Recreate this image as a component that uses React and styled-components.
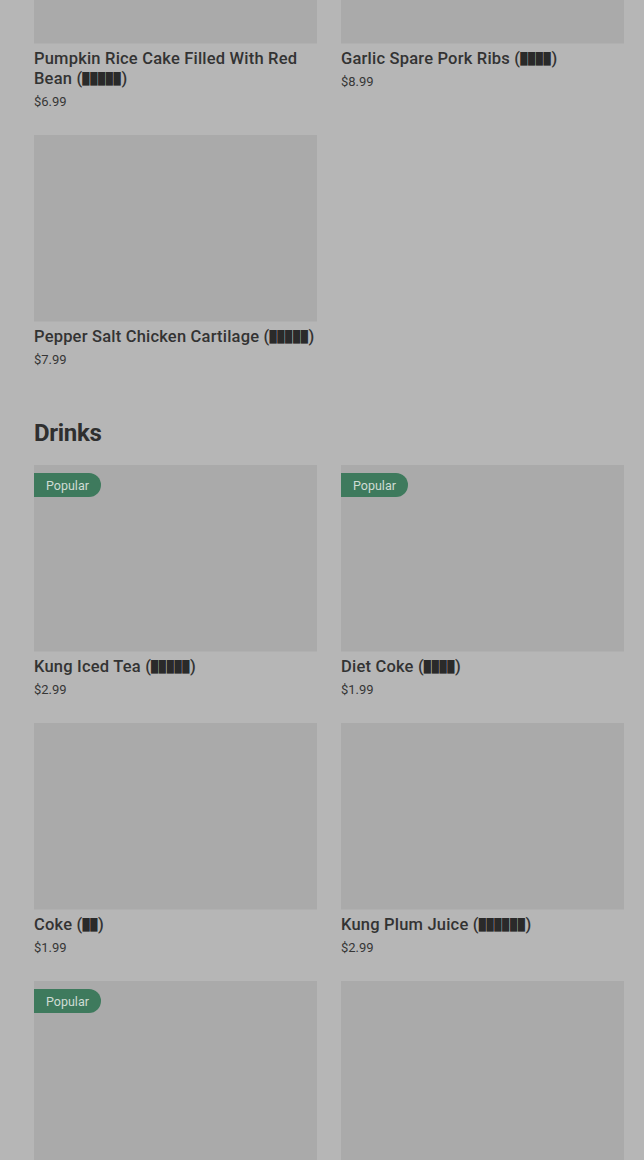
import React from "react";
import styled, { createGlobalStyle } from "styled-components";

const GlobalStyle = createGlobalStyle`
  html, body {
    margin: 0;
    padding: 0;
    background: #b6b6b6;
    overflow: hidden;
  }
  body {
    font-family: Roboto, "Noto Sans", sans-serif;
    color: #2f2f2f;
  }
`;

const Page = styled.div`
  padding: 0 20px 0 34px;
  margin-top: -143px;
`;

const Section = styled.section`
  & + & {
    margin-top: 49px;
  }
`;

const SectionTitle = styled.h2`
  margin: 0 0 17px;
  font-size: 24px;
  line-height: 30px;
  font-weight: 700;
  letter-spacing: -0.3px;
  color: #2f2f2f;
`;

const Grid = styled.div`
  display: grid;
  grid-template-columns: 1fr 1fr;
  column-gap: 24px;
  row-gap: 24px;
`;

const Card = styled.div`
  display: flex;
  flex-direction: column;
`;

const Thumb = styled.div`
  position: relative;
  height: 187px;
  background: #aaaaaa;
  border-bottom: 1px solid #b0b0b0;
  box-sizing: border-box;
`;

const Badge = styled.span`
  position: absolute;
  top: 8px;
  left: 0;
  height: 24px;
  padding: 0 12px;
  display: flex;
  align-items: center;
  background: #3e7a5d;
  color: #cfdcd4;
  font-size: 12.5px;
  border-radius: 0 12px 12px 0;
`;

const Name = styled.div`
  margin-top: 5px;
  font-size: 16.5px;
  line-height: 20px;
  font-weight: 500;
  letter-spacing: 0.2px;
  color: #333333;
`;

const Price = styled.div`
  margin-top: 4px;
  font-size: 13px;
  line-height: 18px;
  color: #363636;
`;

const Tofu = styled.span`
  font-family: "Liberation Mono", monospace;
  font-size: 12px;
  line-height: 0;
  letter-spacing: 0.6px;
  vertical-align: 2px;
  color: #2a2a2a;
`;

const sections = [
  {
    title: null,
    items: [
      { name: "Pumpkin Rice Cake Filled With Red Bean", tofu: 5, price: "$6.99" },
      { name: "Garlic Spare Pork Ribs", tofu: 4, price: "$8.99" },
      { name: "Pepper Salt Chicken Cartilage", tofu: 5, price: "$7.99" },
    ],
  },
  {
    title: "Drinks",
    items: [
      { name: "Kung Iced Tea", tofu: 5, price: "$2.99", popular: true },
      { name: "Diet Coke", tofu: 4, price: "$1.99", popular: true },
      { name: "Coke", tofu: 2, price: "$1.99" },
      { name: "Kung Plum Juice", tofu: 6, price: "$2.99" },
      { name: "Kung Milk Tea", tofu: 5, price: "$2.99", popular: true },
      { name: "Sprite", tofu: 2, price: "$1.99" },
    ],
  },
];

function MenuItem({ item }) {
  return (
    <Card>
      <Thumb>{item.popular && <Badge>Popular</Badge>}</Thumb>
      <Name>
        {item.name} (<Tofu>{"█".repeat(item.tofu)}</Tofu>)
      </Name>
      <Price>{item.price}</Price>
    </Card>
  );
}

export default function App() {
  return (
    <>
      <GlobalStyle />
      <Page>
        {sections.map((s, i) => (
          <Section key={i}>
            {s.title && <SectionTitle>{s.title}</SectionTitle>}
            <Grid>
              {s.items.map((item) => (
                <MenuItem key={item.name} item={item} />
              ))}
            </Grid>
          </Section>
        ))}
      </Page>
    </>
  );
}
